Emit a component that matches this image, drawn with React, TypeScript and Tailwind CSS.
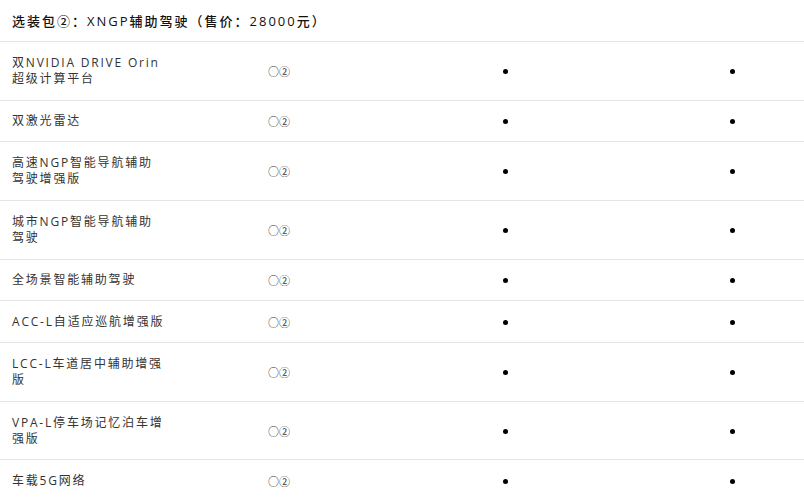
import React from "react";

const rows: string[][] = [
  ["双NVIDIA DRIVE Orin", "超级计算平台"],
  ["双激光雷达"],
  ["高速NGP智能导航辅助", "驾驶增强版"],
  ["城市NGP智能导航辅助", "驾驶"],
  ["全场景智能辅助驾驶"],
  ["ACC-L自适应巡航增强版"],
  ["LCC-L车道居中辅助增强", "版"],
  ["VPA-L停车场记忆泊车增", "强版"],
  ["车载5G网络"],
];

const App = () => {
  return (
    <div
      className="w-[804px] bg-white text-[#333] text-[12px] leading-[16px] tracking-[1.8px]"
      style={{ fontFamily: '"Open Sans", "Noto Sans CJK SC", sans-serif' }}
    >
      <div className="h-[42px] flex items-center px-3 border-b border-[#e5e5e5] text-[13px] font-medium tracking-[2px] text-[#111]">
        选装包②：XNGP辅助驾驶（售价：28000元）
      </div>
      {rows.map((lines) => (
        <div
          key={lines.join("")}
          className={`grid grid-cols-[268px_235px_227px_1fr] items-center border-b border-[#e5e5e5] ${
            lines.length > 1 ? "h-[58.6px]" : "h-[41.8px]"
          }`}
        >
          <div className="pl-3 whitespace-nowrap">
            {lines.map((l) => (
              <div key={l}>{l}</div>
            ))}
          </div>
          <div className="tracking-normal text-[11px] pt-[2px]">○②</div>
          <div className="flex pt-[1px]">
            <span className="w-[5px] h-[5px] rounded-full bg-black" />
          </div>
          <div className="flex pt-[1px]">
            <span className="w-[5px] h-[5px] rounded-full bg-black" />
          </div>
        </div>
      ))}
    </div>
  );
};

export default App;
